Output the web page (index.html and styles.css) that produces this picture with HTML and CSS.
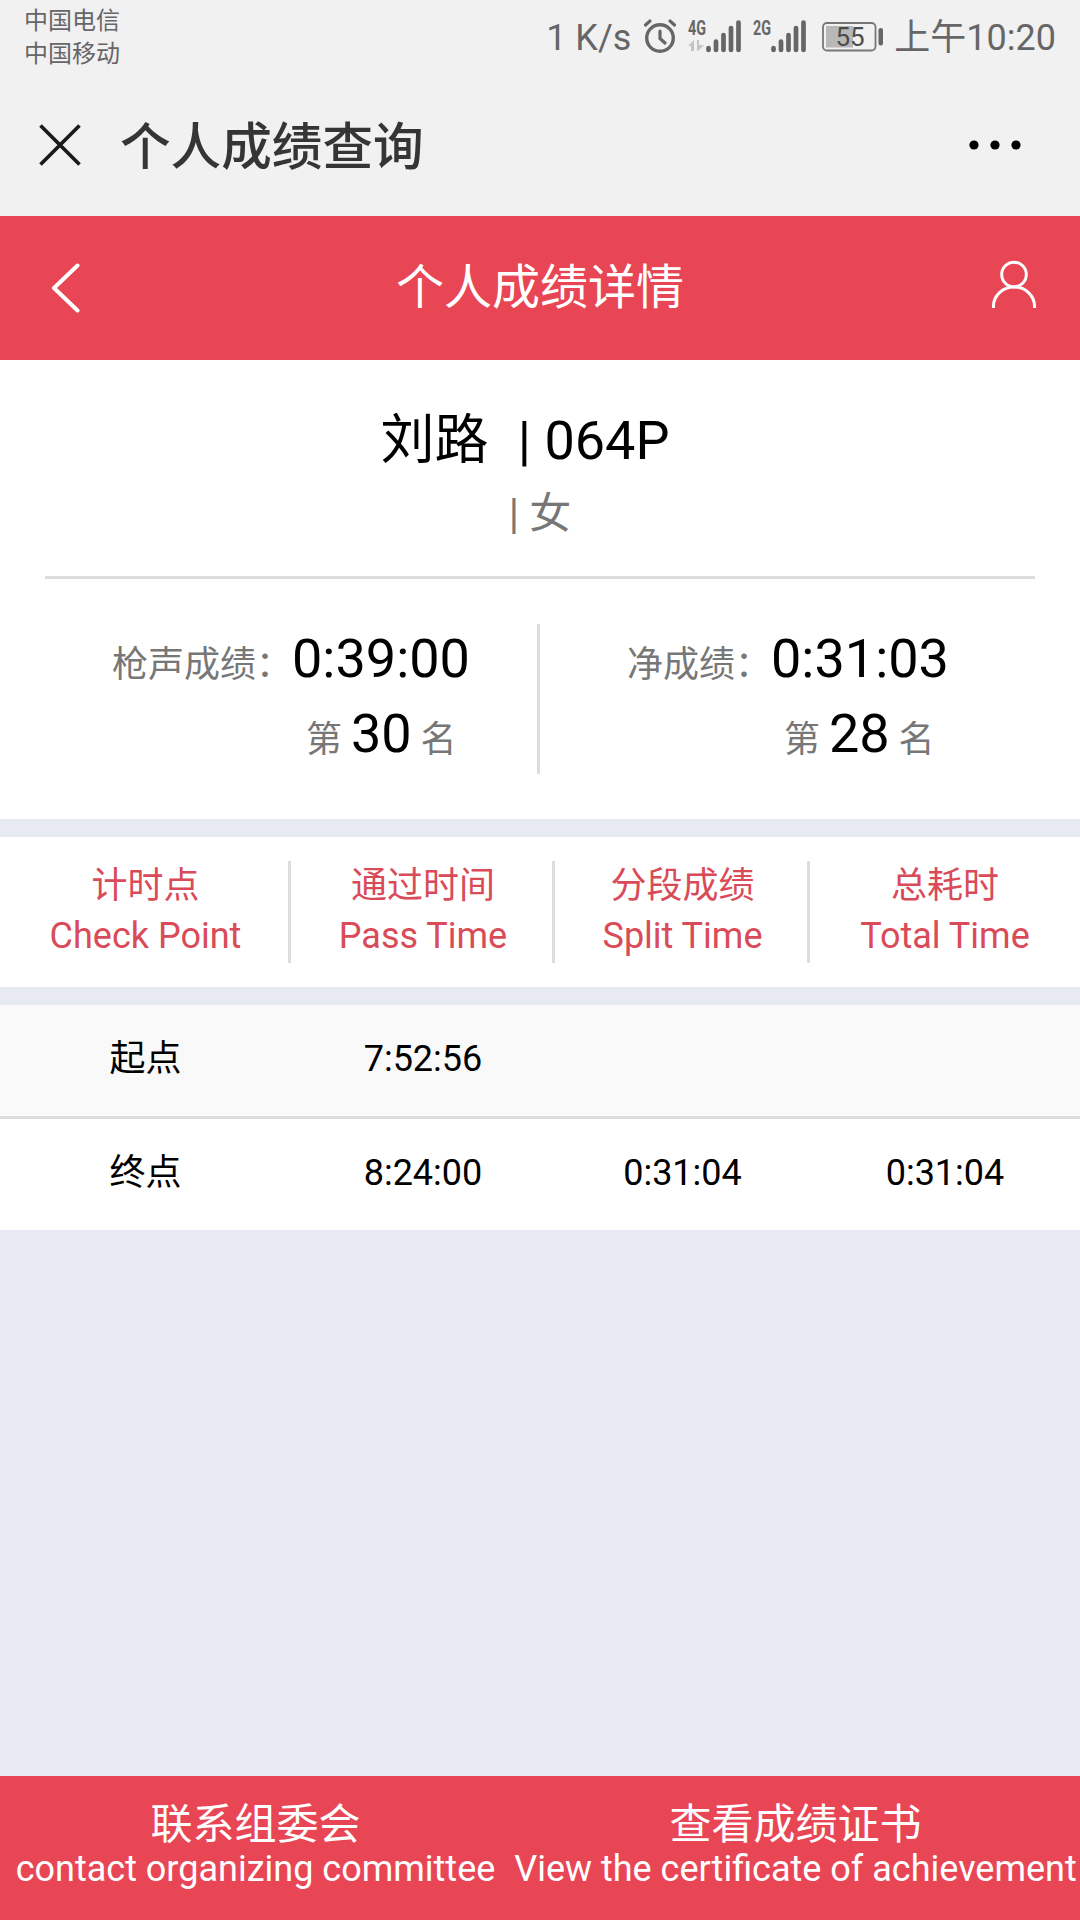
FILE: index.html
```html
<!DOCTYPE html>
<html lang="zh-CN">
<head>
    <meta charset="UTF-8">
    <meta name="viewport" content="width=device-width, initial-scale=1.0">
    <title>个人成绩查询</title>
    <link rel="stylesheet" href="styles.css">
</head>
<body>
    <div class="status-bar">
        <div class="carriers">
            <div>中国电信</div>
            <div>中国移动</div>
        </div>
        <div class="status-right">
            <span class="speed">1 K/s</span>
            <svg class="alarm" width="34" height="38" viewBox="0 0 34 38" fill="none" stroke="#666" stroke-linecap="round">
                <circle cx="17" cy="21" r="13.3" stroke-width="3.4"/>
                <path d="M17 14v7.5l5 4.5" stroke-width="3.2"/>
                <path d="M2.5 8L7 4M31.5 8L27 4" stroke-width="3.2"/>
            </svg>
            <svg class="signal" width="56" height="43" viewBox="0 -5 56 43">
                <text class="net" x="2" y="17" textLength="18" lengthAdjust="spacingAndGlyphs">4G</text>
                <path d="M2 28l6-6v11h-3v-5zM11 22h2v5h5l-6 6h-1z" fill="#c4c4c4"/>
                <path d="M22.5 30v2M30 23.5v8.5M37.5 17v15M45 10v22M52.5 4.5v27.5" stroke="#666" stroke-width="4.7" stroke-linecap="round"/>
            </svg>
            <svg class="signal" width="56" height="43" viewBox="0 -5 56 43">
                <text class="net" x="2" y="17" textLength="18" lengthAdjust="spacingAndGlyphs">2G</text>
                <path d="M22.5 30v2M30 23.5v8.5M37.5 17v15M45 10v22M52.5 4.5v27.5" stroke="#666" stroke-width="4.7" stroke-linecap="round"/>
            </svg>
            <svg class="battery" width="62" height="30" viewBox="0 0 62 30">
                <rect x="1" y="1" width="52.5" height="27.5" rx="4" fill="none" stroke="#777" stroke-width="1.8"/>
                <rect x="4" y="4" width="27" height="21.5" fill="#b8b8b8"/>
                <rect x="56.5" y="6" width="4.5" height="17.5" rx="2.2" fill="#666"/>
                <text x="13.5" y="24" class="level">55</text>
            </svg>
            <span class="time">上午10:20</span>
        </div>
    </div>

    <div class="nav">
        <svg class="close" width="42" height="42" viewBox="0 0 42 42" stroke="#1a1a1a" stroke-width="3.7">
            <path d="M1.5 1.5l39 39M40.5 1.5l-39 39"/>
        </svg>
        <div class="nav-title">个人成绩查询</div>
        <svg class="more" width="52" height="10" viewBox="0 0 52 10">
            <circle cx="5" cy="5" r="4.6"/>
            <circle cx="26" cy="5" r="4.6"/>
            <circle cx="47" cy="5" r="4.6"/>
        </svg>
    </div>

    <div class="header">
        <svg width="30" height="52" viewBox="0 0 30 52" fill="none" stroke="#fff" stroke-width="4" stroke-linecap="round">
            <path d="M27.5 3.5L4 26l23.5 22.5" stroke-linejoin="round"/>
        </svg>
        <h1>个人成绩详情</h1>
        <svg class="user" width="46" height="50" viewBox="0 0 46 50" fill="none" stroke="#fff" stroke-width="3">
            <circle cx="23" cy="15.5" r="12.3"/>
            <path d="M2.5 49v-2a20.5 19 0 0 1 41 0v2"/>
        </svg>
    </div>

    <div class="profile">
        <div class="name"><span>刘路</span> | 064P</div>
        <div class="gender">| 女</div>
    </div>
    <div class="scores">
        <div class="score gun">
            <div class="score-time">枪声成绩：<b>0:39:00</b></div>
            <div class="rank">第 <b>30</b> 名</div>
        </div>
        <div class="score net-score">
            <div class="score-time">净成绩：<b>0:31:03</b></div>
            <div class="rank">第 <b>28</b> 名</div>
        </div>
    </div>

    <div class="table-head row">
        <div>计时点<br>Check Point</div>
        <div>通过时间<br>Pass Time</div>
        <div>分段成绩<br>Split Time</div>
        <div>总耗时<br>Total Time</div>
    </div>
    <div class="table-body">
        <div class="row">
            <div>起点</div>
            <div>7:52:56</div>
            <div></div>
            <div></div>
        </div>
        <div class="row">
            <div>终点</div>
            <div>8:24:00</div>
            <div>0:31:04</div>
            <div>0:31:04</div>
        </div>
    </div>

    <div class="footer">
        <div class="contact">
            <div class="cn">联系组委会</div>
            <div class="en">contact organizing committee</div>
        </div>
        <div class="certificate">
            <div class="cn">查看成绩证书</div>
            <div class="en">View the certificate of achievement</div>
        </div>
    </div>
</body>
</html>
```
FILE: styles.css
```css
* {
    box-sizing: border-box;
}
body {
    margin: 0;
    width: 1080px;
    height: 1920px;
    overflow: hidden;
    background-color: #e7eaf2;
    font-family: Roboto, "Noto Sans CJK SC", sans-serif;
    font-size: 36px;
    color: #000;
    display: flex;
    flex-direction: column;
}
svg {
    display: block;
    flex: none;
}
b {
    font-weight: 400;
    line-height: 0;
}
.status-bar {
    height: 72px;
    background: #f1f1f1;
    color: #666;
    display: flex;
    justify-content: space-between;
    padding: 5px 24px 0 24px;
}
.carriers {
    font-size: 24px;
    line-height: 33px;
}
.status-right {
    display: flex;
    align-items: flex-start;
    font-size: 36px;
    line-height: 44px;
    padding-top: 11px;
    white-space: nowrap;
}
.alarm {
    margin: 1px 0 0 12px;
}
.signal {
    margin: -3px 0 0 9px;
}
.net {
    font-size: 21px;
    font-weight: 700;
    fill: #666;
}
.battery {
    margin: 6px 10px 0 15px;
}
.level {
    font-size: 26px;
    fill: #4c4c4c;
}
.nav {
    height: 144px;
    background: #f1f1f1;
    display: flex;
    align-items: center;
    padding: 2px 59px 0 39px;
}
.nav-title {
    flex: 1;
    margin-left: 39px;
    padding-top: 6px;
    font-size: 50.6px;
    font-weight: 500;
    line-height: 60px;
    color: #353535;
}
.header {
    height: 144px;
    background: #e94655;
    display: flex;
    align-items: center;
    justify-content: space-between;
    padding: 0 43px 0 50px;
}
.header h1 {
    margin: 0 0 0 9px;
    font-size: 48px;
    font-weight: 400;
    line-height: 60px;
    color: #fff;
}
.user {
    margin-bottom: 9px;
}
.profile {
    height: 219px;
    padding: 46px 45px 0;
    text-align: center;
    background: linear-gradient(#ddd, #ddd) center bottom / 990px 3px no-repeat #fff;
}
.name {
    font-size: 54px;
    line-height: 69px;
    padding-right: 30px;
}
.name span {
    margin-right: 16px;
}
.gender {
    font-size: 42px;
    line-height: 77px;
    color: #777;
}
.scores {
    height: 240px;
    padding: 45px 0;
    background: #fff;
    display: flex;
}
.score {
    padding-top: 4px;
    color: #777;
    line-height: 75px;
}
.score b {
    font-size: 54px;
    color: #000;
}
.gun {
    width: 540px;
    border-right: 3px solid #ddd;
    padding-left: 112px;
}
.gun .rank {
    padding-left: 194px;
}
.net-score {
    padding-left: 87px;
}
.net-score .rank {
    padding-left: 157px;
}
.row {
    display: grid;
    grid-template-columns: 291px 264px 255px 270px;
    text-align: center;
}
.table-head {
    height: 150px;
    margin: 18px 0;
    padding: 24px 0;
    background: #fff;
    color: #d94b58;
    line-height: 50px;
}
.table-head div {
    padding-left: 3px;
    border-right: 3px solid #ddd;
}
.table-head div:last-child {
    padding-left: 0;
    border-right: none;
}
.table-body .row {
    height: 114px;
    background: #f9f9f9;
    border-bottom: 3px solid #ddd;
    line-height: 108px;
}
.table-body .row:last-child {
    height: 111px;
    background: #fff;
    border-bottom: none;
}
.footer {
    height: 144px;
    margin-top: auto;
    padding-top: 24px;
    background: #e94655;
    color: #fff;
    display: flex;
    text-align: center;
    white-space: nowrap;
}
.contact {
    width: 511px;
}
.certificate {
    width: 569px;
}
.cn {
    font-size: 42px;
    line-height: 50px;
}
.en {
    font-size: 36px;
    line-height: 38px;
}
```
